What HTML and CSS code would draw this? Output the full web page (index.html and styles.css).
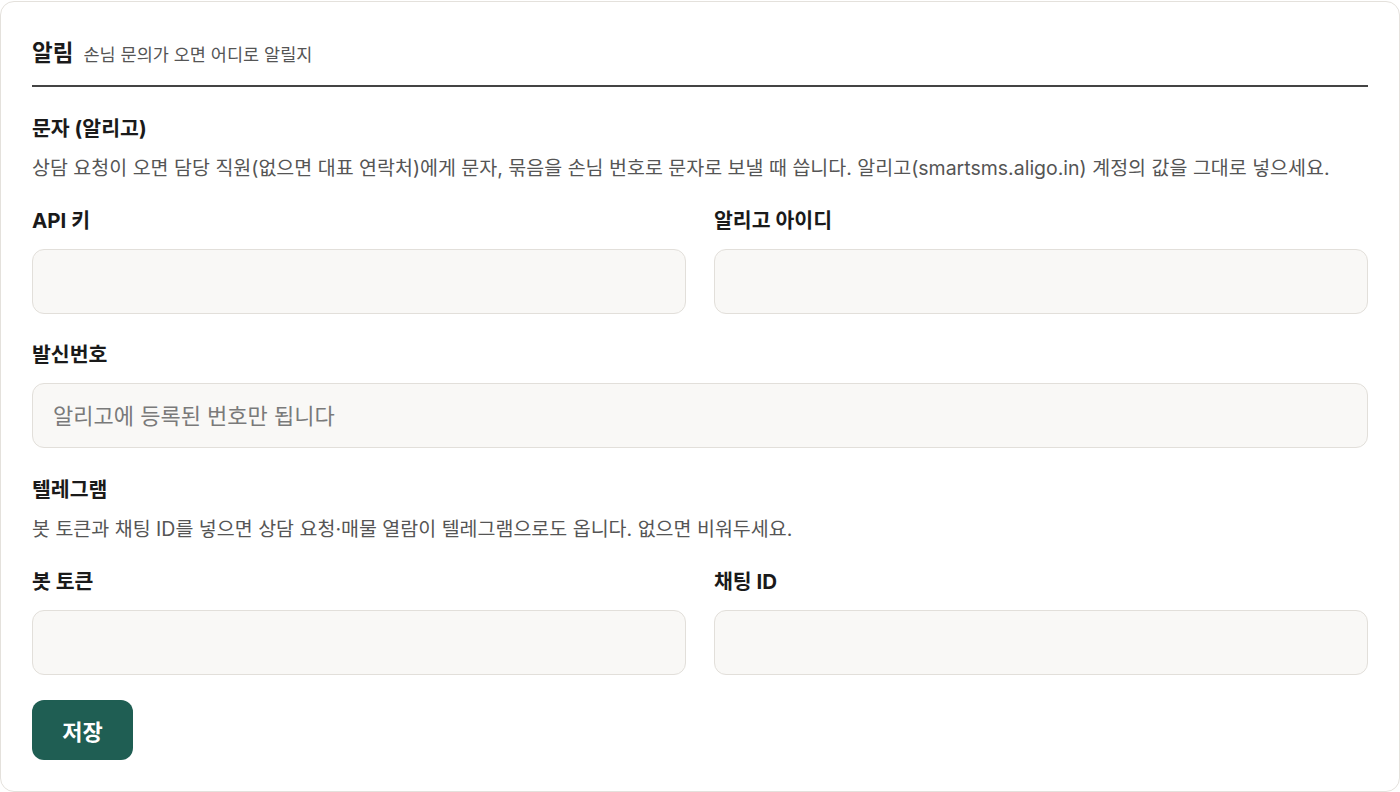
FILE: index.html
```html
<!DOCTYPE html>
<html lang="ko">
<head>
<meta charset="utf-8">
<title>알림</title>
<link rel="stylesheet" href="styles.css">
</head>
<body>
<section class="card">
  <header class="card-head">
    <h2 class="card-title">알림</h2>
    <span class="card-sub">손님 문의가 오면 어디로 알릴지</span>
  </header>

  <div class="group">
    <h3 class="group-title">문자 (알리고)</h3>
    <p class="group-desc">상담 요청이 오면 담당 직원(없으면 대표 연락처)에게 문자, 묶음을 손님 번호로 문자로 보낼 때 씁니다. 알리고(smartsms.aligo.in) 계정의 값을 그대로 넣으세요.</p>
    <div class="row two">
      <label class="field">
        <span class="field-label">API 키</span>
        <input class="input" type="text">
      </label>
      <label class="field">
        <span class="field-label">알리고 아이디</span>
        <input class="input" type="text">
      </label>
    </div>
    <div class="row">
      <label class="field">
        <span class="field-label">발신번호</span>
        <input class="input" type="text" placeholder="알리고에 등록된 번호만 됩니다">
      </label>
    </div>
  </div>

  <div class="group">
    <h3 class="group-title">텔레그램</h3>
    <p class="group-desc">봇 토큰과 채팅 ID를 넣으면 상담 요청·매물 열람이 텔레그램으로도 옵니다. 없으면 비워두세요.</p>
    <div class="row two">
      <label class="field">
        <span class="field-label">봇 토큰</span>
        <input class="input" type="text">
      </label>
      <label class="field">
        <span class="field-label">채팅 ID</span>
        <input class="input" type="text">
      </label>
    </div>
  </div>

  <div class="actions">
    <button class="btn-save" type="button">저장</button>
  </div>
</section>
</body>
</html>
```

FILE: styles.css
```css
* { box-sizing: border-box; }

html, body {
  margin: 0;
  padding: 0;
  background: #ffffff;
}

body {
  font-family: "Inter", "Noto Sans CJK KR", sans-serif;
  color: #1c1c1c;
  padding-top: 1px;
}

.card {
  height: 791px;
  border: 1px solid #e4e1dc;
  border-radius: 14px;
  background: #ffffff;
  padding: 37px 31px 0 31px;
}

.card-head {
  display: flex;
  align-items: baseline;
  gap: 10px;
  padding-bottom: 18px;
  border-bottom: 2px solid #444444;
}

.card-title {
  margin: 0;
  font-size: 22.5px;
  line-height: 28px;
  font-weight: 700;
  color: #1a1a1a;
}

.card-sub {
  font-size: 17.5px;
  line-height: 24px;
  color: #555555;
}

.group {
  margin-top: 29px;
}

.group-title {
  margin: 0;
  font-size: 20.5px;
  line-height: 26px;
  font-weight: 700;
  color: #1a1a1a;
}

.group-desc {
  margin: 14px 0 0;
  font-size: 19.5px;
  line-height: 24px;
  color: #555555;
}

.row {
  display: grid;
  grid-template-columns: 1fr;
  gap: 28px;
  margin-top: 28px;
}

.row.two {
  grid-template-columns: 1fr 1fr;
}

.field {
  display: flex;
  flex-direction: column;
  gap: 15px;
}

.field-label {
  font-size: 20.5px;
  line-height: 26px;
  font-weight: 700;
  color: #1a1a1a;
}

.input {
  height: 65px;
  width: 100%;
  border: 1px solid #e2dfda;
  border-radius: 12px;
  background: #f9f8f6;
  padding: 0 20px;
  font-family: inherit;
  font-size: 22px;
  color: #1a1a1a;
  outline: none;
}

.input::placeholder {
  color: #7a7a7a;
}

.actions {
  margin-top: 25px;
}

.btn-save {
  width: 101px;
  height: 60px;
  border: none;
  border-radius: 12px;
  background: #1f5e53;
  color: #ffffff;
  font-family: inherit;
  font-size: 22px;
  font-weight: 700;
  cursor: pointer;
}
```
